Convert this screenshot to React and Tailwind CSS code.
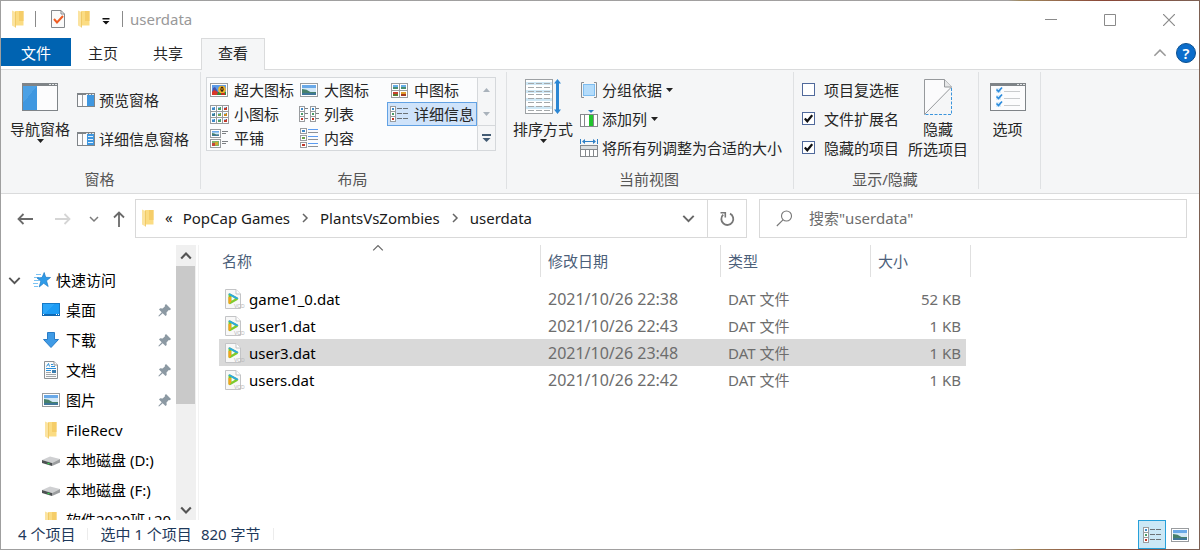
import React from "react";

/* ---------- icons ---------- */

function FolderIcon() {
  return (
    <svg width="14" height="18" viewBox="0 0 14 18" aria-hidden="true">
      <path d="M4 1h8.500v14.500H4z" fill="#fbdc83" />
      <path d="M8 1h4.500v10H8z" fill="#f5cd69" />
      <path d="M1 .5l3.500 1.500v15.500L1 15.500z" fill="#fbe3a0" />
      <path d="M4.500 2v15.500" stroke="#eec45c" strokeWidth=".8" />
    </svg>
  );
}

function CheckDocIcon() {
  return (
    <svg width="16" height="18" viewBox="0 0 16 18" aria-hidden="true">
      <path d="M1.500.5h9.500l3.500 3.500v13.500h-13z" fill="#fafafa" stroke="#85888c" />
      <path d="M11 .5V4h3.500" fill="none" stroke="#85888c" />
      <path d="M4 9l3 3.500 6-6.500" fill="none" stroke="#ef5c23" strokeWidth="2" />
    </svg>
  );
}

function Caret({ className = "text-[#222]" }) {
  return (
    <svg width="7" height="4" viewBox="0 0 7 4" className={className} aria-hidden="true">
      <path d="M0 0h7L3.500 4z" fill="currentColor" />
    </svg>
  );
}

function WindowFrame({ children, w, h, bar = 3 }) {
  return (
    <svg width={w} height={h} viewBox={`0 0 ${w} ${h}`} shapeRendering="crispEdges" aria-hidden="true">
      <rect x=".5" y=".5" width={w - 1} height={h - 1} fill="#fcfcfd" stroke="#7f8488" />
      <rect x="0" y="0" width={w} height={bar} fill="#7f8488" />
      <path d={`M${w - 9} 1h2v1h-2zM${w - 6} 1h2v1h-2zM${w - 3} 1h2v1h-2z`} fill="#e4e6e8" />
      {children}
    </svg>
  );
}

function NavPaneIcon() {
  return (
    <WindowFrame w={36} h={28}>
      <rect x="1" y="3" width="14" height="24" fill="#3f97e0" />
      <path d="M1 3h14L1 20z" fill="#4ca1e5" />
    </WindowFrame>
  );
}

function PreviewPaneIcon() {
  return (
    <WindowFrame w={18} h={14} bar={2}>
      <path d="M5.500 2v11" stroke="#9b9fa3" />
      <rect x="10" y="2" width="7" height="11" fill="#3f97e0" />
    </WindowFrame>
  );
}

function DetailsPaneIcon() {
  return (
    <WindowFrame w={18} h={14} bar={2}>
      <path d="M5.500 2v11" stroke="#9b9fa3" />
      <rect x="10" y="2" width="7" height="11" fill="#3f97e0" />
      <path d="M11 4.500h5M11 7.500h5M11 10.500h5" stroke="#e4f1fc" />
    </WindowFrame>
  );
}

function OptionsIcon() {
  return (
    <WindowFrame w={36} h={28}>
      {[4, 11, 18].map((y) => (
        <g key={y} shapeRendering="auto">
          <rect x="6" y={y + 1} width="5" height="5" fill="#d9ecfa" />
          <path d={`M6.500 ${y + 2.5}l2 2 3.500-4`} fill="none" stroke="#2b8bdd" strokeWidth="1.700" />
          <path d={`M14 ${y + 4.5}h16`} stroke="#c9cbcd" />
        </g>
      ))}
    </WindowFrame>
  );
}

function Scene({ x, y, w, h }) {
  return (
    <g>
      <rect x={x} y={y} width={w} height={h} fill="#6aa9e8" />
      <rect x={x} y={y + h * 0.3} width={w} height={h * 0.4} fill="#d3e8f7" />
      <path
        d={`M${x} ${y + h * 0.4}q${w * 0.35} 0 ${w * 0.6} ${h * 0.3}h${w * 0.4}v${h * 0.3}h-${w}z`}
        fill="#47806b"
      />
      <rect x={x} y={y + h * 0.8} width={w} height={h * 0.2} fill="#3f7699" />
    </g>
  );
}

function PictureIcon() {
  return (
    <svg width="18" height="14" viewBox="0 0 18 14" aria-hidden="true">
      <rect x=".5" y=".5" width="17" height="13" fill="#fff" stroke="#999c9f" />
      <Scene x={2} y={2} w={14} h={10} />
    </svg>
  );
}

function ExtraLargeIcon() {
  return (
    <svg width="18" height="14" viewBox="0 0 18 14" aria-hidden="true">
      <rect x=".5" y=".5" width="17" height="13" fill="#fff" stroke="#999c9f" />
      <rect x="2" y="2" width="14" height="10" fill="#5b9be8" />
      <rect x="2" y="9" width="14" height="3" fill="#2c8a3a" />
      <path d="M3 5l2-1 2 3 1 3H2z" fill="#4a55a8" />
      <path d="M2 9l2-2 4 2-1 3H2z" fill="#d8372a" />
      <circle cx="12" cy="6.500" r="3.800" fill="#f0b429" />
      <ellipse cx="12" cy="6.300" rx="1.600" ry="2.800" fill="#3c2410" />
      <circle cx="12" cy="6" r=".8" fill="#f0b429" />
      <rect x="11" y="10" width="4" height="2" fill="#c53024" />
    </svg>
  );
}

const TILE_COLORS = ["#3f8ac9", "#4a9b68", "#c0392b", "#3c7f9a", "#6ca24c", "#c98a20"];

function MediumIcon() {
  return (
    <svg width="17" height="15" viewBox="0 0 17 15" shapeRendering="crispEdges" aria-hidden="true">
      {[0, 1, 2, 3].map((i) => {
        const x = (i % 2) * 8;
        const y = Math.floor(i / 2) * 7;
        return (
          <g key={i}>
            <rect x={x + 0.5} y={y + 0.5} width="8" height="7" fill="#fff" stroke="#999c9f" />
            <rect x={x + 2} y={y + 2} width="5" height="2" fill={i === 2 ? "#c94030" : i === 3 ? "#e0a030" : "#66aee8"} />
            <rect x={x + 2} y={y + 4} width="5" height="2" fill={i === 2 ? "#5c7a30" : i === 3 ? "#a43b20" : "#4a8f72"} />
          </g>
        );
      })}
    </svg>
  );
}

function SmallIcon() {
  return (
    <svg width="19" height="19" viewBox="0 0 19 19" shapeRendering="crispEdges" aria-hidden="true">
      {[0, 1, 2, 3, 4, 5, 6, 7, 8].map((i) => {
        const x = (i % 3) * 6;
        const y = Math.floor(i / 3) * 6;
        return (
          <g key={i}>
            <rect x={x + 0.5} y={y + 0.5} width="6" height="6" fill="#fff" stroke="#999c9f" />
            <rect x={x + 2} y={y + 2} width="3" height="3" fill={TILE_COLORS[i % 6]} />
            <rect x={x + 2} y={y + 2} width="2" height="1" fill="#8fc4ee" />
          </g>
        );
      })}
    </svg>
  );
}

function StackTiles({ x }) {
  return (
    <g>
      {[0, 1, 2].map((i) => (
        <g key={i}>
          <rect x={x + 0.5} y={i * 5 + 0.5} width="5" height="5" fill="#fff" stroke="#999c9f" />
          <rect x={x + 2} y={i * 5 + 2} width="2" height="2" fill={TILE_COLORS[i]} />
        </g>
      ))}
    </g>
  );
}

function ListIcon() {
  return (
    <svg width="20" height="16" viewBox="0 0 20 16" shapeRendering="crispEdges" aria-hidden="true">
      <StackTiles x={0} />
      <StackTiles x={11} />
      <path d="M6 2.500h3M6 7.500h3M6 12.500h3M17 2.500h3M17 7.500h3M17 12.500h3" stroke="#7c8084" />
    </svg>
  );
}

function DetailsIcon() {
  return (
    <svg width="18" height="16" viewBox="0 0 18 16" shapeRendering="crispEdges" aria-hidden="true">
      <StackTiles x={0} />
      <path d="M7 2.500h5M13 2.500h5M7 7.500h5M13 7.500h5M7 12.500h5M13 12.500h5" stroke="#6c7276" />
    </svg>
  );
}

function TilesIcon() {
  return (
    <svg width="19" height="19" viewBox="0 0 19 19" aria-hidden="true">
      <rect x=".5" y=".5" width="10" height="8" fill="#fff" stroke="#999c9f" />
      <Scene x={2} y={2} w={7} h={5} />
      <rect x=".5" y="10.500" width="10" height="8" fill="#fff" stroke="#999c9f" />
      <rect x="2" y="12" width="7" height="5" fill="#7fb069" />
      <rect x="2" y="14" width="3" height="3" fill="#c4473a" />
      <rect x="5" y="13" width="3" height="3" fill="#d6a72e" />
      <path d="M12 2.500h6M12 4.500h4M12 12.500h6M12 14.500h4" stroke="#7c8084" shapeRendering="crispEdges" />
    </svg>
  );
}

function ContentIcon() {
  return (
    <svg width="18" height="20" viewBox="0 0 18 20" shapeRendering="crispEdges" aria-hidden="true">
      {[0, 7, 14].map((y, i) => (
        <g key={y}>
          <rect x=".5" y={y + 0.5} width="6" height="5" fill="#fff" stroke="#999c9f" />
          <rect x="2" y={y + 2} width="3" height="2" fill={TILE_COLORS[(i * 4) % 6]} />
          <path d={`M8 ${y + 1.5}h10`} stroke="#5b9bf0" />
          <path d={`M8 ${y + 4.5}h10`} stroke="#8d9195" />
        </g>
      ))}
    </svg>
  );
}

function SortIcon() {
  return (
    <svg width="36" height="36" viewBox="0 0 36 36" aria-hidden="true">
      <rect x=".5" y=".5" width="27" height="34" fill="#fff" stroke="#9da1a4" />
      <g shapeRendering="crispEdges">
        {[3, 11, 19, 27].map((y) => (
          <rect key={y} x="1" y={y} width="26" height="3" fill="#cfe8f6" />
        ))}
        {[4, 8, 12, 15, 19, 23, 27, 31].map((y) => (
          <path key={y} d={`M3 ${y + 0.5}h6M11 ${y + 0.5}h6M19 ${y + 0.5}h6`} stroke="#a4a8aa" />
        ))}
      </g>
      <path d="M32.500 0l3.500 4.500h-2v26h2L32.500 35 29 30.500h2v-26h-2z" fill="#2b86d3" />
    </svg>
  );
}

function GroupByIcon() {
  return (
    <svg width="18" height="18" viewBox="0 0 18 18" aria-hidden="true">
      <path d="M4 1.500H1.500v15H4M14 1.500h2.500v15H14" fill="none" stroke="#8a8e92" />
      <rect x="3.500" y="3.500" width="11" height="11" fill="#b4dcfb" stroke="#7dbdf0" />
    </svg>
  );
}

function AddColumnIcon() {
  return (
    <svg width="18" height="18" viewBox="0 0 18 18" aria-hidden="true">
      <path d="M8 0h6l-3 3z" fill="#2f7fc4" />
      <rect x=".5" y="4.500" width="17" height="12" fill="#fff" stroke="#85898d" />
      <path d="M4.500 4v13M13.500 4v13" stroke="#85898d" />
      <rect x="9" y="5" width="4" height="11" fill="#22c52e" />
    </svg>
  );
}

function FitColumnsIcon() {
  return (
    <svg width="18" height="18" viewBox="0 0 18 18" aria-hidden="true">
      <path d="M.5 0v5M17.500 0v5M3 2.500h12" stroke="#2f7fc4" />
      <path d="M5 0L2 2.500 5 5zM13 0l3 2.500L13 5z" fill="#2f7fc4" />
      <rect x=".5" y="6.500" width="17" height="11" fill="#fff" stroke="#85898d" />
      <rect x="1" y="7" width="16" height="3" fill="#dcdedf" />
      <path d="M0 10.500h18M5.500 10v8M9.500 10v8M13.500 10v8" stroke="#85898d" />
    </svg>
  );
}

function HideIcon() {
  return (
    <svg width="28" height="36" viewBox="0 0 28 36" aria-hidden="true">
      <path d="M.5 35.500V.5h20l7 7z" fill="#fbfbfc" />
      <path d="M.5 35.500V.5h20l7 7.500-27 27.500" fill="none" stroke="#96999c" />
      <path d="M20.500.5V8h7" fill="#e6e7e8" stroke="#96999c" />
      <path d="M27.500 9v26.500H1" fill="none" stroke="#3b95dc" strokeDasharray="3 1.500" />
    </svg>
  );
}

function VideoFileIcon() {
  return (
    <svg width="20" height="20" viewBox="0 0 20 20" aria-hidden="true">
      <path d="M.5.500h10.500l4.500 4.500v14.500h-15z" fill="#f8f8f8" stroke="#c3c4c6" />
      <path d="M11 .5V5h4.500" fill="#fff" stroke="#c3c4c6" />
      <path d="M3.500 5.500Q3.500 4 5 4.600L12.500 8.500Q14 9.800 12.500 11L5.500 15Q4 15.600 3.500 14z" fill="#7ccb2c" />
      <path d="M3.500 5.500Q3.500 4 5 4.600L12.500 8.500Q13.500 9.300 13.200 10L10 9.600 6 7z" fill="#2aa6e6" />
      <path d="M3.500 8V14Q3.600 14.800 4.300 15.100L6.200 12.500V8z" fill="#f8a01e" />
      <path d="M6.500 7.500L10 9.700 6.500 11.800z" fill="#f4fbff" />
      <text x="9" y="18.600" fontSize="5" fontFamily="Liberation Sans, sans-serif" fill="#b4b6b8">VCD</text>
    </svg>
  );
}

function StarIcon() {
  return (
    <svg width="18" height="16" viewBox="0 0 18 16" aria-hidden="true">
      <path d="M3 2.500h5M1 5.500h5M1 8.500h5M0 11.500h5M1 14.500h4" stroke="#7cc3f3" />
      <path
        d="M11.200.500l1.500 4.800 4.800.200-4 3.200 1.700 5.800-4.500-3.200L6.200 15l1.600-5.700-3.800-3.400 5-.3z"
        fill="#2f9be8"
        stroke="#1c7ac4"
        strokeWidth=".7"
      />
    </svg>
  );
}

function DesktopIcon() {
  return (
    <svg width="18" height="14" viewBox="0 0 18 14" shapeRendering="crispEdges" aria-hidden="true">
      <rect x=".5" y=".5" width="17" height="12" fill="#1c9cf5" stroke="#1579c6" />
      <path d="M1 1h11L3 11H1z" fill="#2ca6f9" />
      <rect x="0" y="11" width="18" height="2" fill="#0f68b3" />
      <path d="M1 11h1v1H1zM14 11h1v1h-1zM16 11h1v1h-1z" fill="#fff" />
    </svg>
  );
}

function DownloadIcon() {
  return (
    <svg width="16" height="16" viewBox="0 0 16 16" aria-hidden="true">
      <path d="M4.500.5h7v7h4L8 15.500.5 7.500h4z" fill="#3f9be6" stroke="#2a7cc6" />
    </svg>
  );
}

function DocumentIcon() {
  return (
    <svg width="14" height="18" viewBox="0 0 14 18" aria-hidden="true">
      <path d="M.5.500h9.500l3.500 3.500v13.500H.5z" fill="#fbfbfb" stroke="#8d9194" />
      <path d="M10 .5V4h3.500" fill="#fff" stroke="#8d9194" />
      <path d="M2.500 5.500L4.500 2.500 5.500 5.500M7 3.500h2M7 5.500h4M2 7.500h10M2 9.500h5" fill="none" stroke="#2b8fd9" />
      <path d="M2 11.500h5M2 13.500h10M2 15.500h10" stroke="#a2a6a9" />
      <rect x="8" y="9" width="4" height="3" fill="#3c7daf" />
    </svg>
  );
}

function DriveIcon() {
  return (
    <svg width="18" height="12" viewBox="0 0 18 12" aria-hidden="true">
      <path d="M0 6l8-3.500 10 2.500-8 4z" fill="#cfd0d2" />
      <path d="M0 6l10 3v3L0 9z" fill="#4d5052" />
      <path d="M10 9l8-4v3.500L10 12z" fill="#9c9ea0" />
      <rect x="5.500" y="8.800" width="2" height="1.500" fill="#39d353" />
    </svg>
  );
}

function PinIcon() {
  return (
    <svg width="13" height="13" viewBox="0 0 13 13" aria-hidden="true">
      <path d="M8 0l5 5-1.200 1.200-1-.2-2.300 2.500.2 2.500L7.500 12 4.700 9.200 1 12.500.3 12l3.400-3.800L1 5.500l1.200-1.200 2.400.2L7 2.200 6.800 1.200z" fill="#8c99a3" />
    </svg>
  );
}

function Chevron({ dir = "down", size = 10, className = "text-[#555]", stroke = 1.5 }) {
  const d = {
    down: "M1 3l4 4 4-4",
    up: "M1 7l4-4 4 4",
    right: "M3 1l4 4-4 4",
  }[dir];
  return (
    <svg width={size} height={size} viewBox="0 0 10 10" className={className} aria-hidden="true">
      <path d={d} fill="none" stroke="currentColor" strokeWidth={stroke} />
    </svg>
  );
}

function Arrow({ dir, className }) {
  const d = {
    left: "M16 8H1.500M6.500 3l-5 5 5 5",
    right: "M0 8h14.500M9.500 3l5 5-5 5",
    up: "M8 16V1.500M3 6.500l5-5 5 5",
  }[dir];
  return (
    <svg width="16" height="16" viewBox="0 0 16 16" className={className} aria-hidden="true">
      <path d={d} fill="none" stroke="currentColor" strokeWidth="1.800" />
    </svg>
  );
}

/* ---------- ribbon ---------- */

function Group({ caption, className, children }) {
  return (
    <section className="mt-0.5 mb-1 flex flex-col border-r border-[#dfe1e3]" aria-label={caption || "选项"}>
      <div className={`flex h-[97px] items-start ${className}`}>{children}</div>
      <div className="h-5 pr-0.5 text-center leading-5 text-[#555]">{caption}</div>
    </section>
  );
}

function BigButton({ icon, lines, caret }) {
  return (
    <button type="button" className="flex w-16 shrink-0 flex-col items-center pt-[7px]">
      <span className="flex h-9 items-center">{icon}</span>
      <span className="mt-1 block whitespace-nowrap leading-5">
        {lines.map((line) => (
          <span key={line} className="block">{line}</span>
        ))}
      </span>
      {caret && <Caret />}
    </button>
  );
}

function RowButton({ icon, label, caret, className = "h-[29px]" }) {
  return (
    <button type="button" className={`flex items-center gap-1 whitespace-nowrap ${className}`}>
      {icon}
      <span>{label}</span>
      {caret && <Caret />}
    </button>
  );
}

function ToggleRow({ label, checked }) {
  return (
    <label className="flex h-[29px] items-center gap-[9px] whitespace-nowrap">
      <span className="grid size-[13px] place-items-center">
        <input
          type="checkbox"
          defaultChecked={checked}
          className="peer col-start-1 row-start-1 size-[13px] appearance-none border border-[#50699b] bg-white"
        />
        <svg width="9" height="9" viewBox="0 0 9 9" className="pointer-events-none col-start-1 row-start-1 hidden peer-checked:block" aria-hidden="true">
          <path d="M.8 4.500l2.500 2.800L8.200 1.200" fill="none" stroke="#111" strokeWidth="2.200" />
        </svg>
      </span>
      {label}
    </label>
  );
}

const LAYOUTS = [
  { label: "超大图标", icon: <ExtraLargeIcon /> },
  { label: "大图标", icon: <PictureIcon /> },
  { label: "中图标", icon: <MediumIcon /> },
  { label: "小图标", icon: <SmallIcon /> },
  { label: "列表", icon: <ListIcon /> },
  { label: "详细信息", icon: <DetailsIcon />, selected: true },
  { label: "平铺", icon: <TilesIcon /> },
  { label: "内容", icon: <ContentIcon /> },
];

function LayoutGallery() {
  return (
    <div className="mt-[5px] flex">
      <div className="grid grid-cols-[90px_90px_90px] border border-[#d5d8db] bg-[#fbfcfd]">
        {LAYOUTS.map(({ label, icon, selected }) => (
          <button
            key={label}
            type="button"
            aria-pressed={!!selected}
            className={`flex h-6 items-center gap-[5px] whitespace-nowrap border pl-px ${
              selected ? "border-[#62a2e4] bg-[#cfe3fa]" : "border-transparent"
            }`}
          >
            <span className="flex w-5 shrink-0 justify-center">{icon}</span>
            {label}
          </button>
        ))}
      </div>
      <div className="flex w-[18px] flex-col border-y border-r border-[#d5d8db] text-[#a9b2bb]">
        <button type="button" aria-label="上一行" className="flex flex-1 items-center justify-center">
          <svg width="7" height="4" viewBox="0 0 7 4" aria-hidden="true"><path d="M0 4h7L3.500 0z" fill="currentColor" /></svg>
        </button>
        <button type="button" aria-label="下一行" className="flex flex-1 items-center justify-center">
          <Caret className="text-[#a9b2bb]" />
        </button>
        <button type="button" aria-label="更多" className="flex flex-1 items-center justify-center border-t border-[#d5d8db]">
          <svg width="9" height="8" viewBox="0 0 9 8" aria-hidden="true">
            <path d="M0 0h9v2H0zM.5 4h8l-4 4z" fill="#435b73" />
          </svg>
        </button>
      </div>
    </div>
  );
}

function Ribbon() {
  return (
    <div className="flex h-[125px] shrink-0 border-y border-[#dadbdc] bg-[#f5f6f7] text-[#262626]">
      <Group caption="窗格" className="w-[199px] gap-[5px] pl-[7px]">
        <BigButton icon={<NavPaneIcon />} lines={["导航窗格"]} caret />
        <div className="pt-2">
          <RowButton className="h-[39px]" icon={<PreviewPaneIcon />} label="预览窗格" />
          <RowButton className="h-[39px]" icon={<DetailsPaneIcon />} label="详细信息窗格" />
        </div>
      </Group>
      <Group caption="布局" className="w-[305px] pl-[5px]">
        <LayoutGallery />
      </Group>
      <Group caption="当前视图" className="w-[286px] gap-[5px] pl-1">
        <BigButton icon={<SortIcon />} lines={["排序方式"]} caret />
        <div className="pt-[3px]">
          <RowButton icon={<GroupByIcon />} label="分组依据" caret />
          <RowButton icon={<AddColumnIcon />} label="添加列" caret />
          <RowButton icon={<FitColumnsIcon />} label="将所有列调整为合适的大小" />
        </div>
      </Group>
      <Group caption="显示/隐藏" className="w-[184px] gap-[7px] pl-2">
        <div className="pt-[3px]">
          <ToggleRow label="项目复选框" />
          <ToggleRow label="文件扩展名" checked />
          <ToggleRow label="隐藏的项目" checked />
        </div>
        <BigButton icon={<HideIcon />} lines={["隐藏", "所选项目"]} />
      </Group>
      <Group className="w-[61px] justify-center pr-1">
        <BigButton icon={<OptionsIcon />} lines={["选项"]} />
      </Group>
    </div>
  );
}

/* ---------- title bar and tabs ---------- */

function TitleBar() {
  return (
    <header className="flex h-[37px] shrink-0 items-center">
      <div className="flex flex-1 items-center pb-px pl-[10px]">
        <FolderIcon />
        <span className="ml-[10px] h-4 w-px bg-[#8a8a8a]" />
        <button type="button" aria-label="属性" className="ml-[14px]"><CheckDocIcon /></button>
        <button type="button" aria-label="新建文件夹" className="ml-[11px]"><FolderIcon /></button>
        <button type="button" aria-label="自定义快速访问工具栏" className="ml-[11px] mt-1">
          <svg width="8" height="7" viewBox="0 0 8 7" aria-hidden="true"><path d="M.5 0h7v1.500h-7zM.5 3h7L4 6.500z" fill="#111" /></svg>
        </button>
        <span className="ml-3 h-4 w-px bg-[#8a8a8a]" />
        <h1 className="ml-[7px] pb-px text-[#999]">userdata</h1>
      </div>
      <div className="flex h-full pr-px text-[#8a8a8a]">
        <button type="button" aria-label="最小化" className="flex w-[58px] items-center justify-center">
          <svg width="12" height="12" viewBox="0 0 12 12" aria-hidden="true"><path d="M0 5.500h12" stroke="currentColor" /></svg>
        </button>
        <button type="button" aria-label="最大化" className="flex w-[59px] items-center justify-center">
          <svg width="12" height="12" viewBox="0 0 12 12" aria-hidden="true"><path d="M.5.500h11v11H.5z" fill="none" stroke="currentColor" /></svg>
        </button>
        <button type="button" aria-label="关闭" className="flex w-[59px] items-center justify-center">
          <svg width="12" height="12" viewBox="0 0 12 12" aria-hidden="true"><path d="M0 0l12 12M12 0L0 12" stroke="currentColor" strokeWidth="1.200" /></svg>
        </button>
      </div>
    </header>
  );
}

function TabBar() {
  const tab = "flex w-16 items-center justify-center pb-[3px]";
  return (
    <nav className="z-10 -mb-px flex h-8 shrink-0 text-[#262626]">
      <button type="button" className="mb-1 w-[70px] bg-[#0063b1] pt-px text-white">文件</button>
      <button type="button" className={`${tab} mr-px`}>主页</button>
      <button type="button" className={`${tab} mr-px`}>共享</button>
      <button type="button" className={`${tab} border-x border-t border-[#dadbdc] bg-[#f5f6f7]`}>查看</button>
      <div className="flex flex-1 items-center justify-end gap-[9px] pr-[3px] pb-0.5">
        <button type="button" aria-label="折叠功能区">
          <Chevron dir="up" size={14} className="text-[#999]" stroke={1.1} />
        </button>
        <button type="button" aria-label="帮助" className="flex size-5 items-center justify-center rounded-full border border-[#0b4f8f] bg-[#0b6dcb] font-semibold text-white">
          ?
        </button>
      </div>
    </nav>
  );
}

/* ---------- address row ---------- */

function AddressRow() {
  return (
    <div className="flex h-[51px] shrink-0 items-start pt-[5px] pr-3">
      <div className="flex h-[39px] w-[134px] items-center pl-4">
        <button type="button" aria-label="后退"><Arrow dir="left" className="text-[#6a6a6a]" /></button>
        <button type="button" aria-label="前进" className="ml-[22px]"><Arrow dir="right" className="text-[#d5d5d5]" /></button>
        <button type="button" aria-label="最近浏览的位置" className="ml-[18px]"><Chevron className="text-[#7b7b7b]" /></button>
        <button type="button" aria-label="上移" className="ml-3"><Arrow dir="up" className="text-[#6a6a6a]" /></button>
      </div>
      <div className="flex h-[39px] flex-1 items-center border border-[#d9d9d9] pl-[5px] text-[#1a1a1a]">
        <nav aria-label="路径" className="flex items-center pb-0.5">
          <FolderIcon />
          <button type="button" aria-label="上级文件夹" className="ml-[10px] pb-0.5">«</button>
          <button type="button" className="ml-[10px]">PopCap Games</button>
          <span className="ml-[10px] flex"><Chevron dir="right" className="text-[#666]" /></span>
          <button type="button" className="ml-[10px]">PlantsVsZombies</button>
          <span className="ml-[10px] flex"><Chevron dir="right" className="text-[#666]" /></span>
          <button type="button" className="ml-[10px]">userdata</button>
        </nav>
        <button type="button" aria-label="以前的位置" className="mr-3 ml-auto"><Chevron size={13} className="text-[#666]" /></button>
        <button type="button" aria-label="刷新" className="flex h-full w-[39px] items-center justify-center border-l border-[#d9d9d9]">
          <svg width="16" height="16" viewBox="0 0 16 16" aria-hidden="true">
            <path d="M11 2.600A6 6 0 1 1 4.200 3.600" fill="none" stroke="#777" strokeWidth="1.800" />
            <path d="M1.500 1.800h4.800v4.800" fill="none" stroke="#777" strokeWidth="1.600" />
          </svg>
        </button>
      </div>
      <label className="ml-3 flex h-[39px] w-[428px] items-center gap-4 border border-[#d9d9d9] pl-4">
        <svg width="17" height="17" viewBox="0 0 17 17" aria-hidden="true">
          <circle cx="10.500" cy="6" r="5" fill="none" stroke="#777" strokeWidth="1.100" />
          <path d="M7 9.800L.8 16" stroke="#777" strokeWidth="1.100" />
        </svg>
        <input
          type="text"
          aria-label="搜索"
          placeholder={'搜索"userdata"'}
          className="min-w-0 flex-1 bg-transparent pb-0.5 outline-none placeholder:text-[#6d6d6d]"
        />
      </label>
    </div>
  );
}

/* ---------- navigation tree ---------- */

const PLACES = [
  { label: "桌面", icon: <DesktopIcon />, pinned: true },
  { label: "下载", icon: <DownloadIcon />, pinned: true },
  { label: "文档", icon: <DocumentIcon />, pinned: true },
  { label: "图片", icon: <PictureIcon />, pinned: true },
  { label: "FileRecv", icon: <FolderIcon /> },
  { label: "本地磁盘 (D:)", icon: <DriveIcon /> },
  { label: "本地磁盘 (F:)", icon: <DriveIcon /> },
  { label: "软件2020班+20", icon: <FolderIcon /> },
];

function Sidebar() {
  return (
    <aside className="flex w-[198px] shrink-0 border-r border-[#f2f2f2] pr-0.5">
      <div className="min-w-0 flex-1 overflow-hidden pt-5 text-black">
        <button type="button" className="flex h-[30px] items-center pl-[7px]">
          <Chevron size={13} className="text-[#555]" />
          <span className="ml-3"><StarIcon /></span>
          <span className="ml-[5px]">快速访问</span>
        </button>
        <ul>
          {PLACES.map(({ label, icon, pinned }) => (
            <li key={label} className="flex h-[30px] items-center pl-10">
              <span className="flex w-5 shrink-0 justify-center">{icon}</span>
              <a href="#" className="ml-[5px] flex-1 whitespace-nowrap">{label}</a>
              {pinned && <span className="mr-[5px]"><PinIcon /></span>}
            </li>
          ))}
        </ul>
      </div>
      <div className="flex w-5 flex-col bg-[#f0f0f0] text-[#555]" aria-hidden="true">
        <span className="flex h-[21px] items-center justify-center"><Chevron dir="up" size={12} stroke={1.8} /></span>
        <span className="mr-px h-[138px] bg-[#c9c9c9]" />
        <span className="mt-auto flex h-[21px] items-center justify-center"><Chevron size={12} stroke={1.8} /></span>
      </div>
    </aside>
  );
}

/* ---------- file list ---------- */

const FILES = [
  { name: "game1_0.dat", date: "2021/10/26 22:38", size: "52 KB" },
  { name: "user1.dat", date: "2021/10/26 22:43", size: "1 KB" },
  { name: "user3.dat", date: "2021/10/26 23:48", size: "1 KB", selected: true },
  { name: "users.dat", date: "2021/10/26 22:42", size: "1 KB" },
];

function HeaderCell({ label, className, sorted }) {
  return (
    <th scope="col" className={`p-0 pb-2 text-left font-normal ${className}`}>
      <button type="button" className="relative flex h-8 w-full items-center border-r border-[#e0e0e0] text-[#4c607a]">
        <span className={sorted ? "pl-[3px]" : "pl-[7px]"}>{label}</span>
        {sorted && (
          <span className="absolute inset-x-0 -top-[3px] flex justify-center pr-1">
            <Chevron dir="up" size={12} className="text-[#666]" stroke={1} />
          </span>
        )}
      </button>
    </th>
  );
}

function FileList() {
  return (
    <main className="min-w-0 flex-1 overflow-hidden pl-5">
      <table className="table-fixed border-collapse whitespace-nowrap text-[#6d6d6d]">
        <thead>
          <tr>
            <HeaderCell label="名称" className="w-[322px]" sorted />
            <HeaderCell label="修改日期" className="w-[180px]" />
            <HeaderCell label="类型" className="w-[150px]" />
            <HeaderCell label="大小" className="w-[100px]" />
          </tr>
        </thead>
        <tbody>
          {FILES.map(({ name, date, size, selected }) => {
            const bg = selected ? "bg-[#d9d9d9]" : "";
            return (
              <tr key={name} className="h-[27px]">
                <td className={`p-0 pl-1.5 text-black ${bg}`}>
                  <span className="flex items-center gap-1"><VideoFileIcon />{name}</span>
                </td>
                <td className={`p-0 pl-[7px] text-base leading-5 ${bg}`}>{date}</td>
                <td className={`p-0 pl-[7px] ${bg}`}>DAT 文件</td>
                <td className="p-0">
                  <div className={`mr-[5px] flex h-[27px] items-center justify-end pr-[5px] ${bg}`}>{size}</div>
                </td>
              </tr>
            );
          })}
        </tbody>
      </table>
    </main>
  );
}

function StatusBar() {
  return (
    <footer className="flex h-[29px] shrink-0 items-center pr-[5px] text-[#1e395b]">
      <div className="flex items-center pb-0.5 pl-[17px]">
        <span>4 个项目</span>
        <span className="ml-3 h-3 w-px bg-[#ececec]" />
        <span className="ml-3">选中 1 个项目</span>
        <span className="ml-[9px]">820 字节</span>
        <span className="ml-3 h-3 w-px bg-[#ececec]" />
      </div>
      <div className="ml-auto flex h-full">
        <button type="button" aria-label="详细信息视图" aria-pressed="true" className="flex w-7 items-center justify-center border border-[#26a0da] bg-[#cbe8f6]">
          <DetailsIcon />
        </button>
        <button type="button" aria-label="大图标视图" className="flex w-7 items-center justify-center"><PictureIcon /></button>
      </div>
    </footer>
  );
}

export default function App() {
  return (
    <div className="flex h-screen flex-col bg-[linear-gradient(to_right,#9f9f9f_0%,#a2a0a0_84%,#a08a60_85%,#8a4636_92%,#7d6154_100%)] p-px font-['Noto_Sans','Noto_Sans_CJK_SC',sans-serif] text-[15px] leading-5">
      <div className="flex min-h-0 flex-1 flex-col bg-white">
        <TitleBar />
        <TabBar />
        <Ribbon />
        <AddressRow />
        <div className="flex min-h-0 flex-1">
          <Sidebar />
          <FileList />
        </div>
        <StatusBar />
      </div>
    </div>
  );
}
